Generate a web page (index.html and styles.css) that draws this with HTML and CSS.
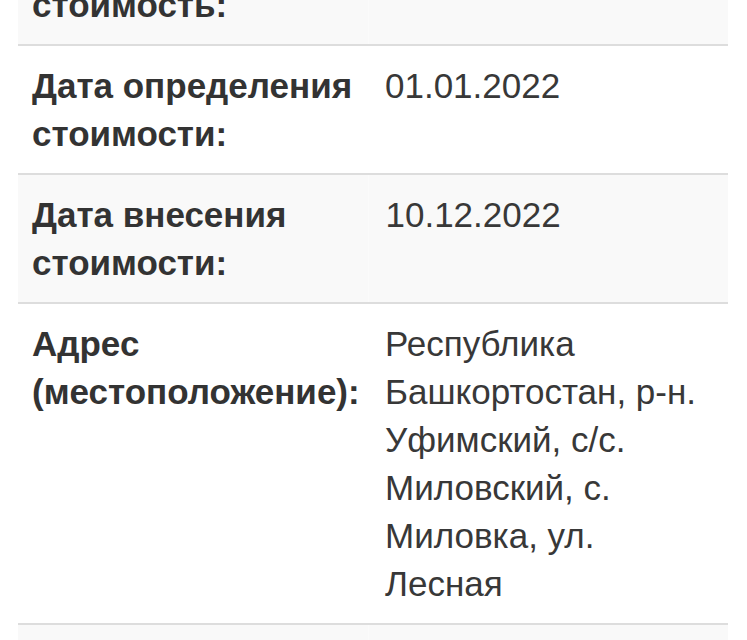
FILE: index.html
```html
<!DOCTYPE html>
<html lang="ru">
<head>
<meta charset="utf-8">
<title>Сведения об объекте</title>
<link rel="stylesheet" href="styles.css">
</head>
<body>
<div class="page">
  <table class="info">
    <colgroup><col class="c-label"><col class="c-value"></colgroup>
    <tbody>
      <tr class="odd">
        <th>Кадастровая стоимость:</th>
        <td>1 234 567.89</td>
      </tr>
      <tr>
        <th>Дата определения стоимости:</th>
        <td>01.01.2022</td>
      </tr>
      <tr class="odd">
        <th>Дата внесения стоимости:</th>
        <td>10.12.2022</td>
      </tr>
      <tr>
        <th>Адрес (местоположение):</th>
        <td>Республика Башкортостан, р-н. Уфимский, с/с. Миловский, с. Миловка, ул. Лесная</td>
      </tr>
      <tr class="odd">
        <th>Площадь:</th>
        <td>1500</td>
      </tr>
    </tbody>
  </table>
</div>
</body>
</html>
```
FILE: styles.css
```css
html, body {
  margin: 0;
  padding: 0;
  background: #ffffff;
}
body {
  font-family: "Liberation Sans", Arial, sans-serif;
  color: #333333;
  overflow: hidden;
}
.page {
  padding: 0 19px 0 18px;
  margin-top: -83px;
}
.info {
  width: 100%;
  border-collapse: collapse;
  table-layout: fixed;
  font-size: 35px;
  line-height: 48px;
}
.c-label { width: 350px; }
.info th,
.info td {
  text-align: left;
  vertical-align: top;
  padding: 16px 8px 15px 14px;
  border-bottom: 2px solid #dddddd;
}
.info th {
  font-weight: bold;
  color: #333333;
}
.info td {
  font-weight: normal;
  color: #383838;
  padding-left: 17px;
  padding-right: 18px;
}
.info tr.odd th,
.info tr.odd td {
  background: #f9f9f9;
}
.info tr.odd td {
  border-left: 1px solid #fbfbfb;
}
```
